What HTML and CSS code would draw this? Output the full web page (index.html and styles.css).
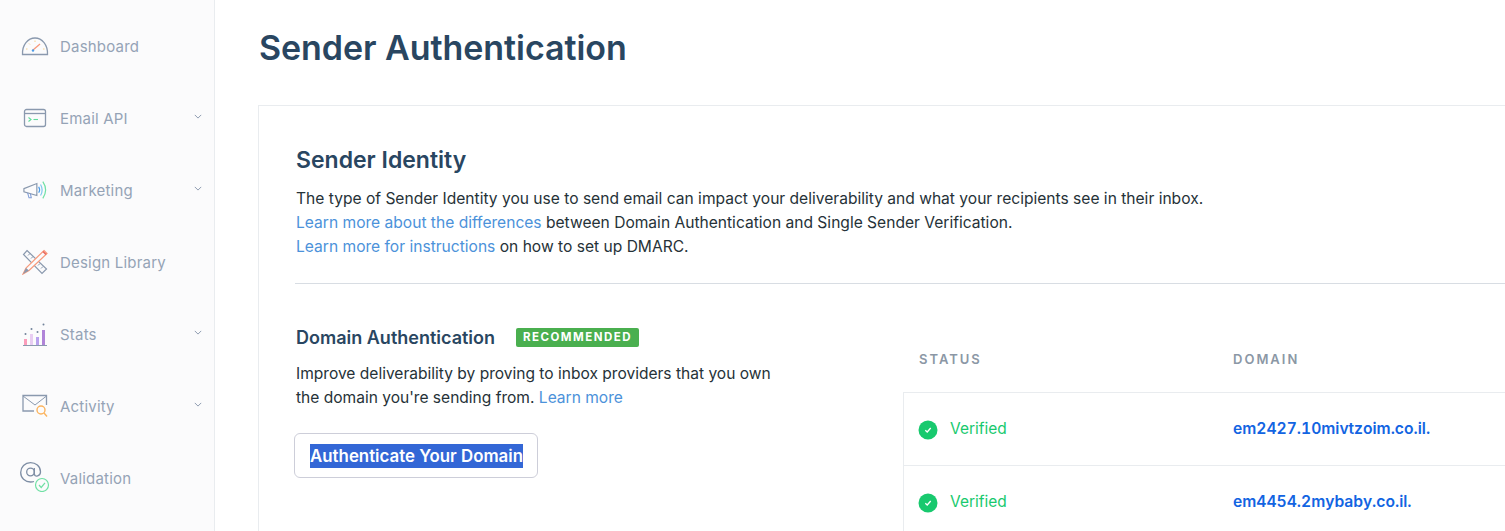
FILE: index.html
```html
<!DOCTYPE html>
<html lang="en">
<head>
<meta charset="utf-8">
<title>Sender Authentication</title>
<link rel="stylesheet" href="styles.css">
</head>
<body>
<div class="app">
  <nav class="sidebar">
    <a class="nav-item"><span class="nav-icon"><svg width="28" height="20" viewBox="0 0 28 20" fill="none"><path d="M1.500 18.500 C1 9 7 2 14 2 C21 2 27 9 26.500 18.500 Z" stroke="#8a99ae" stroke-width="1.300"/><path d="M12 14 L19 8" stroke="#f8997a" stroke-width="1.300"/><circle cx="12" cy="14.500" r="1.200" fill="#4b9be8"/><path d="M5 13h1.500M8 7.500l1 1M14 4.500v1.500M22 13h1.500" stroke="#fbd28a" stroke-width="1"/></svg></span><span class="nav-label">Dashboard</span></a>
    <a class="nav-item"><span class="nav-icon"><svg width="24" height="20" viewBox="0 0 24 20" fill="none"><rect x="1.500" y="1.500" width="21" height="17" rx="2" stroke="#8a99ae" stroke-width="1.300"/><path d="M1.500 5.500h21" stroke="#8a99ae" stroke-width="1.300"/><path d="M5.500 9.500l2.500 2-2.500 2" stroke="#5fdc9b" stroke-width="1.100"/><path d="M10.500 11.500h4.500" stroke="#5fdc9b" stroke-width="1.100"/></svg></span><span class="nav-label">Email API</span><svg class="chev" width="8" height="5" viewBox="0 0 10 6" fill="none"><path d="M1 1l4 4 4-4" stroke="#8a99ae" stroke-width="1.200"/></svg></a>
    <a class="nav-item"><span class="nav-icon"><svg width="24" height="20" viewBox="0 0 26 20" fill="none"><path d="M1 8.500 L15 3 V16 L1 12 Z" stroke="#8a99ae" stroke-width="1.300"/><path d="M5 13 L6.500 18.500 H9 L8 14" stroke="#7d9bd6" stroke-width="1.100"/><path d="M17 6.500 Q19 10 17 13" stroke="#4b9be8" stroke-width="1.300"/><path d="M19 4 Q22.500 10 19 16" stroke="#7fc8ee" stroke-width="1.300"/><path d="M21.500 1 Q27.500 10 21.500 19" stroke="#6fe0a4" stroke-width="1.300"/></svg></span><span class="nav-label">Marketing</span><svg class="chev" width="8" height="5" viewBox="0 0 10 6" fill="none"><path d="M1 1l4 4 4-4" stroke="#8a99ae" stroke-width="1.200"/></svg></a>
    <a class="nav-item"><span class="nav-icon"><svg width="26" height="26" viewBox="0 0 26 26" fill="none"><path d="M5 1.500 L24.500 20 L20 24.500 L1.500 5.500 Z" stroke="#8a99ae" stroke-width="1.200"/><path d="M6 6.500l2-2M9 9.500l2-2M16 16.500l2-2M19 19.500l2-2" stroke="#8a99ae" stroke-width="1"/><path d="M22 1.500 L25 4.500 L7 21.500 L1 25 L4 19 Z" fill="#fbfbfc" stroke="#f8997a" stroke-width="1.200"/><path d="M1 25 L4 19 L7 21.500 Z" fill="#8a99ae"/><path d="M21 2.500 L24 5.500" stroke="#e8675f" stroke-width="1.600"/></svg></span><span class="nav-label">Design Library</span></a>
    <a class="nav-item"><span class="nav-icon"><svg width="26" height="26" viewBox="0 0 26 26" fill="none"><rect x="2" y="18" width="3" height="6" fill="#fb9dbb"/><rect x="8" y="13" width="3" height="11" fill="#e8cdf2"/><rect x="14" y="16" width="3" height="8" fill="#b9a2ee"/><rect x="20" y="9" width="3" height="15" fill="#b084d8"/><path d="M1 24.500h24" stroke="#8a99ae" stroke-width="1"/><circle cx="3.500" cy="13" r="1" fill="#71839b"/><circle cx="9.500" cy="8" r="1" fill="#71839b"/><circle cx="15.500" cy="11" r="1" fill="#71839b"/><circle cx="21.500" cy="3.500" r="1" fill="#71839b"/></svg></span><span class="nav-label">Stats</span><svg class="chev" width="8" height="5" viewBox="0 0 10 6" fill="none"><path d="M1 1l4 4 4-4" stroke="#8a99ae" stroke-width="1.200"/></svg></a>
    <a class="nav-item"><span class="nav-icon"><svg width="26" height="24" viewBox="0 0 26 24" fill="none"><path d="M12 17 H1 V1.500 H24.500 V11" stroke="#8a99ae" stroke-width="1.300"/><path d="M1 2 L13 11 L24.500 2" stroke="#8a99ae" stroke-width="1"/><circle cx="19" cy="16" r="4" stroke="#fbb45f" stroke-width="1.400"/><path d="M22 19 L25 22.500" stroke="#fbb45f" stroke-width="1.400"/></svg></span><span class="nav-label">Activity</span><svg class="chev" width="8" height="5" viewBox="0 0 10 6" fill="none"><path d="M1 1l4 4 4-4" stroke="#8a99ae" stroke-width="1.200"/></svg></a>
    <a class="nav-item"><span class="nav-icon at"><svg width="30" height="30" viewBox="0 0 30 30" fill="none"><circle cx="10.500" cy="10" r="3.800" stroke="#7d8da4" stroke-width="1.300"/><path d="M14.300 6 V12 Q14.800 14.500 17.300 14 Q20.500 13 20.500 10 C20.500 4 15.500 .700 10.500 .700 C5 .700 .700 5 .700 10.500 C.700 16 5 20 10.500 20 Q12.500 20 14 19.500" stroke="#7d8da4" stroke-width="1.300"/><circle cx="22" cy="23" r="6.500" fill="#fbfbfc" stroke="#6fe0a4" stroke-width="1.200"/><path d="M19 23 L21.200 25.500 L25 20.800" stroke="#6fe0a4" stroke-width="1.200"/></svg></span><span class="nav-label">Validation</span></a>
  </nav>
  <main class="main">
    <h1 class="page-title">Sender Authentication</h1>
    <section class="card">
      <h2 class="card-title">Sender Identity</h2>
      <div class="intro">
        <p>The type of Sender Identity you use to send email can impact your deliverability and what your recipients see in their inbox.</p>
        <p><a class="link">Learn more about the differences</a> between Domain Authentication and Single Sender Verification.</p>
        <p><a class="link">Learn more for instructions</a> on how to set up DMARC.</p>
      </div>
      <hr class="rule">
      <div class="columns">
        <div class="left">
          <div class="heading-row">
            <h3 class="sub-title">Domain Authentication</h3>
            <span class="badge">RECOMMENDED</span>
          </div>
          <p class="desc">Improve deliverability by proving to inbox providers that you own<br>the domain you're sending from. <a class="link">Learn more</a></p>
          <button class="btn"><span class="selected">Authenticate Your Domain</span></button>
        </div>
        <div class="right">
          <div class="table-head">
            <span class="col-status">STATUS</span>
            <span class="col-domain">DOMAIN</span>
          </div>
          <div class="table-body">
            <div class="row">
              <span class="col-status status"><svg width="20" height="20" viewBox="0 0 20 20"><circle cx="10" cy="10" r="9.500" fill="#18c96e"/><path d="M7.300 10.300 L9.200 12 L12.700 8" fill="none" stroke="#fff" stroke-width="1.300"/></svg><span>Verified</span></span>
              <a class="col-domain domain">em2427.10mivtzoim.co.il.</a>
            </div>
            <div class="row">
              <span class="col-status status"><svg width="20" height="20" viewBox="0 0 20 20"><circle cx="10" cy="10" r="9.500" fill="#18c96e"/><path d="M7.300 10.300 L9.200 12 L12.700 8" fill="none" stroke="#fff" stroke-width="1.300"/></svg><span>Verified</span></span>
              <a class="col-domain domain">em4454.2mybaby.co.il.</a>
            </div>
          </div>
        </div>
      </div>
    </section>
  </main>
</div>
</body>
</html>
```

FILE: styles.css
```css
* { box-sizing: border-box; }
html, body { margin: 0; height: 531px; overflow: hidden; background: #fff; }
body { font-family: Inter, "Liberation Sans", sans-serif; color: #263f5a; }
.app { display: flex; width: 1505px; height: 531px; overflow: hidden; }
.sidebar {
  width: 215px; flex: none; background: #fbfbfc; border-right: 1px solid #e9ecef;
  padding-top: 28px; display: flex; flex-direction: column; gap: 36px;
}
.nav-item { height: 36px; display: flex; align-items: center; position: relative; color: #95a3b6; font-size: 15px; }
.nav-icon { width: 60px; flex: none; display: flex; justify-content: center; padding-left: 10px; }
.at svg { margin-top: -3px; }
.nav-label { flex: 1; letter-spacing: 0.2px; }
.chev { margin-right: 12px; margin-top: -3px; }
.main { flex: 1; min-width: 0; padding-left: 43px; }
.page-title { margin: 26px 0 0 1px; font-size: 34px; line-height: 44px; font-weight: 600; color: #294661; letter-spacing: -0.05px; }
.card { margin-top: 35px; width: 1300px; height: 500px; border: 1px solid #e9ecef; padding: 40px 36px; }
.card-title { margin: 0 0 0 1px; font-size: 23px; line-height: 28px; font-weight: 600; color: #294661; }
.intro { margin: 13px 0 0 1px; font-size: 15.580px; line-height: 24px; color: #263238; }
.intro p { margin: 0; }
.link { color: #4c92da; }
.rule { margin: 24px 0 0; border: 0; border-top: 1px solid #d8dde3; }
.columns { display: flex; }
.left { width: 608px; flex: none; padding-top: 41px; }
.heading-row { display: flex; align-items: center; height: 24px; gap: 21px; margin-left: 1px; }
.sub-title { margin: 0; font-size: 18px; font-weight: 600; color: #294661; }
.badge { background: #4aaf4f; color: #fff; font-size: 11.500px; font-weight: 700; letter-spacing: 1.480px; line-height: 19px; padding: 0 7px; border-radius: 2px; }
.desc { margin: 13px 0 0 1px; font-size: 15.550px; line-height: 24px; color: #263238; }
.btn {
  display: block; margin: 23px 0 0 -1px; width: 244px; height: 45px; background: #fff; border: 1px solid #cdced9;
  border-radius: 6px; padding: 0 0 0 1px; text-align: center; font: 600 16.850px Inter, "Liberation Sans", sans-serif; color: #294661;
}
.selected { background: #3367d6; color: #fff; line-height: 24px; display: inline-block; }
.right { flex: 1; padding-top: 67px; }
.table-head { display: flex; height: 41px; font-size: 13px; font-weight: 600; letter-spacing: 2px; color: #8b97a5; }
.table-head .col-status { padding-left: 16px; width: 330px; }
.col-status { width: 329px; padding-left: 15px; flex: none; }
.table-body { border-left: 1px solid #e9ecef; }
.table-body .col-status { padding-left: 14px; }
.row { height: 73px; display: flex; align-items: center; border-top: 1px solid #e9ecef; padding-bottom: 2px; }
.status { display: flex; align-items: center; gap: 12px; color: #18c96e; font-size: 15.500px; }
.status svg { margin-top: 4px; }
.domain { font-size: 15.650px; font-weight: 600; color: #1264e2; font-variant-numeric: tabular-nums; font-kerning: none; }
```
